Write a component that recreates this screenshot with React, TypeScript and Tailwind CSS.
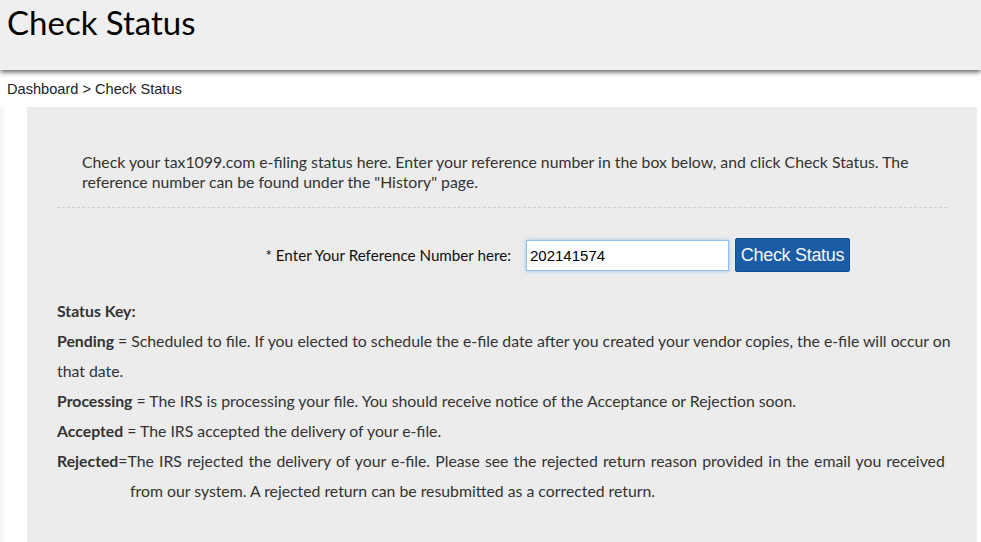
import React from 'react';

const statusRows = [
  {
    name: 'Processing',
    text: 'The IRS is processing your file. You should receive notice of the Acceptance or Rejection soon.',
  },
  {
    name: 'Accepted',
    text: 'The IRS accepted the delivery of your e-file.',
  },
];

export default function App() {
  return (
    <div className="min-h-[542px] bg-white font-['Lato',sans-serif]">
      {/* Header */}
      <div className="relative z-10 h-[70px] bg-[#efefef] shadow-[0_2px_5px_rgba(0,0,0,0.65)]">
        <h1 className="pl-[7px] pt-[1px] font-['Lato',sans-serif] text-[33px] font-normal leading-[42px] text-black">
          Check Status
        </h1>
      </div>

      {/* Breadcrumb */}
      <div className="px-[7px] pt-[10px] pb-[9px] font-['Liberation_Sans',sans-serif] text-[14.6px] leading-[18px] text-[#222]">
        Dashboard &gt; Check Status
      </div>

      <div className="flex">
        <div className="w-[6px] shrink-0 bg-gradient-to-r from-[#f3f3f3] to-white" />
        <div className="ml-[21px] mr-[4px] min-w-0 flex-1 bg-[#ececec] px-[30px] pt-[45px] pb-[40px] text-[15.8px] text-[#333]">
          <p className="px-[25px] leading-[20px]">
            Check your tax1099.com e-filing status here. Enter your reference number in the box below, and click Check Status. The
            reference number can be found under the "History" page.
          </p>
          <div className="mt-[15px] border-t border-dashed border-[#cfcfcf]" />

          <div className="mt-[30px] flex items-center">
            <label className="w-[454px] shrink-0 text-right text-[15.2px] text-[#111]">* Enter Your Reference Number here:</label>
            <input
              defaultValue="202141574"
              className="ml-[15px] h-[31px] w-[203px] border border-[#8fc1ec] bg-white px-[3px] font-['Liberation_Sans',sans-serif] text-[15px] text-black shadow-[0_0_4px_rgba(102,175,233,0.6)] outline-none"
            />
            <button className="ml-[6px] h-[34px] w-[115px] rounded-[2px] border border-[#154e8f] bg-[#1b5ca7] font-['Liberation_Sans',sans-serif] text-[18px] tracking-[-0.3px] text-[#f4f6fa]">
              Check Status
            </button>
          </div>

          <div className="mt-[24px] leading-[30px]">
            <div className="font-bold">Status Key:</div>
            <div>
              <div className="whitespace-nowrap">
                <span className="font-bold">Pending</span> = Scheduled to file. If you elected to schedule the e-file date after you created your vendor copies, the e-file will occur on
              </div>
              <div>that date.</div>
            </div>
            {statusRows.map((r) => (
              <div key={r.name}>
                <span className="font-bold">{r.name}</span> = {r.text}
              </div>
            ))}
            <div>
              <div className="whitespace-nowrap [word-spacing:1.1px]">
                <span className="font-bold">Rejected</span>=The IRS rejected the delivery of your e-file. Please see the rejected return reason provided in the email you received
              </div>
              <div className="pl-[73px]">from our system. A rejected return can be resubmitted as a corrected return.</div>
            </div>
          </div>
        </div>
      </div>
    </div>
  );
}
